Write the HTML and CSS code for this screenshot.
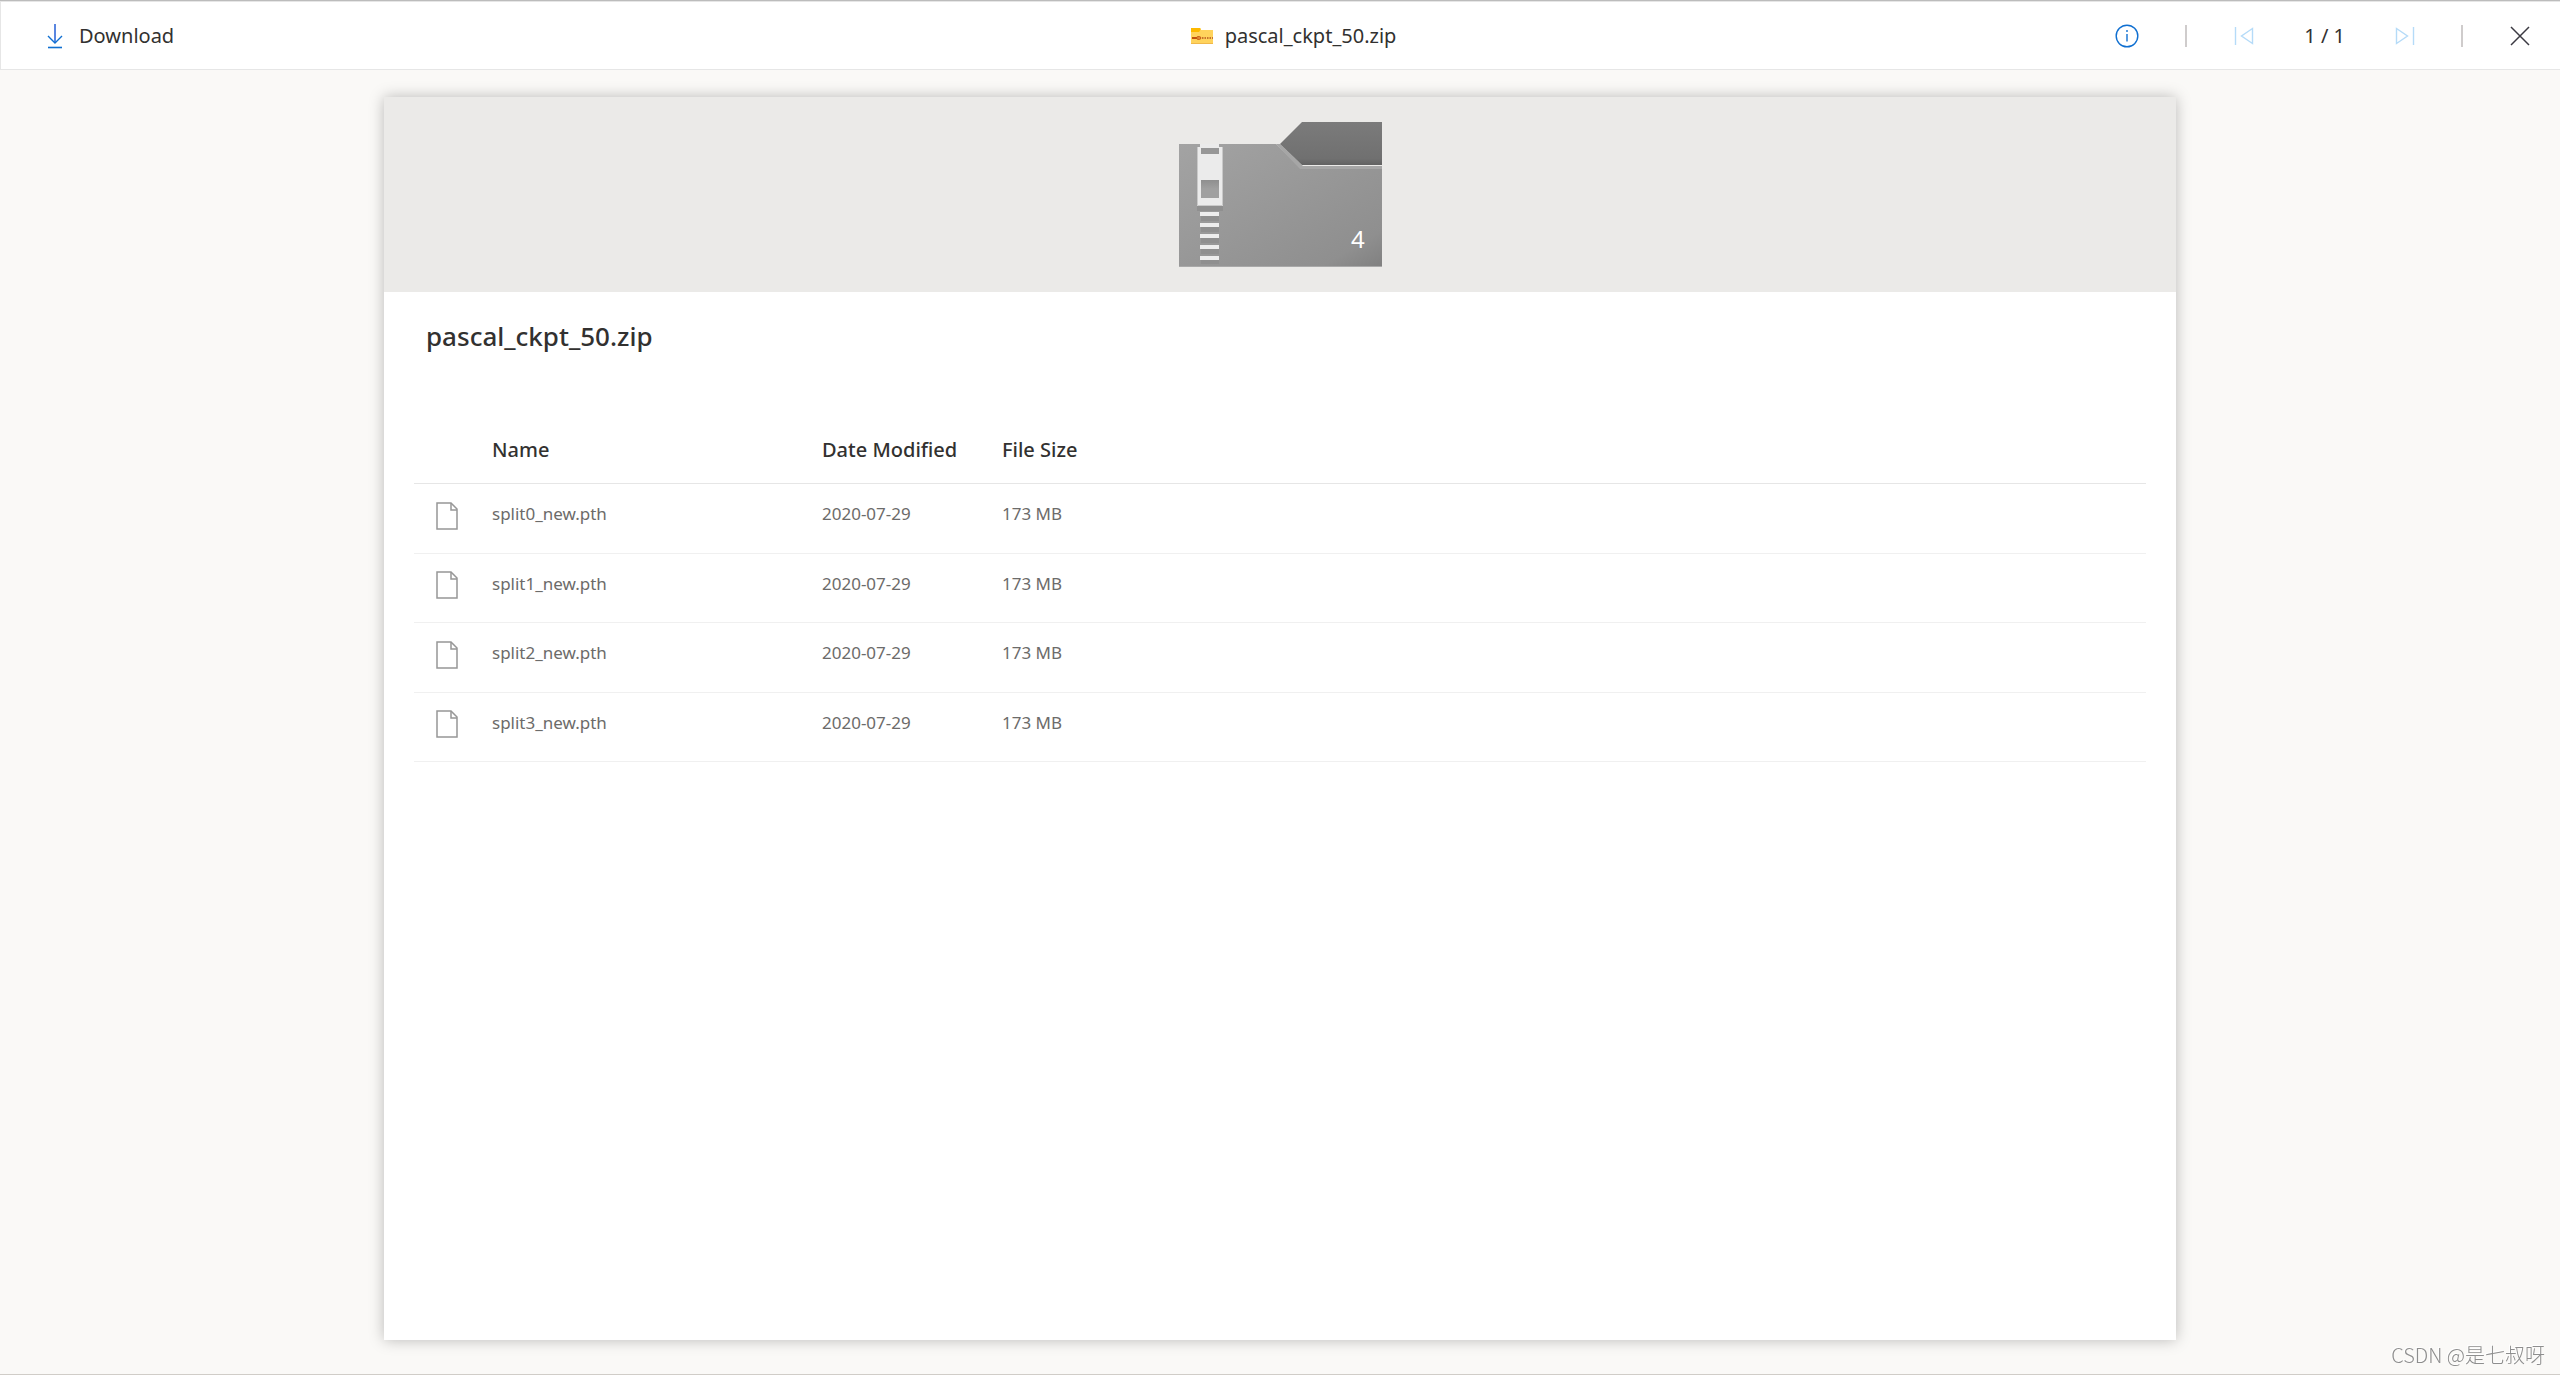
FILE: index.html
```html
<!DOCTYPE html>
<html lang="en">
<head>
<meta charset="utf-8">
<title>pascal_ckpt_50.zip</title>
<link rel="stylesheet" href="styles.css">
</head>
<body>
<header class="toolbar">
  <div class="toolbar-left">
    <button class="command" type="button">
      <svg class="icon-download" viewBox="0 0 16 26" width="16" height="26" fill="none" stroke="#0f6fd1"><path d="M8 1V20" stroke="#5a86e0" stroke-width="2"/><path d="M1 13L8 20L15 13" stroke-width="1.4"/><path d="M1 24.5H15" stroke-width="1.6"/></svg>
      <span>Download</span>
    </button>
  </div>
  <div class="toolbar-title">
    <svg viewBox="0 0 22 16" width="22" height="16"><path d="M0 1H9L10 2H22V16H0Z" fill="#ffd35c"/><path d="M0 0H9L10 1L8 4H0Z" fill="#fdb900"/><path d="M0 15H22V16H0Z" fill="#f0b84a"/><path d="M1 9H6V11H1Z" fill="#c2500e"/><rect x="5.700" y="8.700" width="4" height="2.600" rx="1" fill="#e8953a" stroke="#c2500e"/><path d="M11 10H22" stroke="#b5541c" stroke-width="1.500" stroke-dasharray="1.500 1"/></svg>
    <span>pascal_ckpt_50.zip</span>
  </div>
  <div class="toolbar-right">
    <button class="icon-button" type="button" aria-label="Details"><svg viewBox="0 0 24 24" width="24" height="24" fill="none" stroke="#0f6fd1" stroke-width="1.4"><circle cx="12" cy="12" r="10.800"/><path d="M12 10V17.500"/><path d="M12 6V8"/></svg></button>
    <span class="divider"></span>
    <button class="icon-button" type="button" aria-label="Previous file" disabled><svg viewBox="0 0 20 20" width="20" height="20" fill="none" stroke="#b5dbf8" stroke-width="1.4"><path d="M1.500 1V19"/><path d="M18.500 2.500V17.500L7.500 10Z"/></svg></button>
    <span class="pages">1 / 1</span>
    <button class="icon-button" type="button" aria-label="Next file" disabled><svg viewBox="0 0 20 20" width="20" height="20" fill="none" stroke="#b5dbf8" stroke-width="1.4"><path d="M18.500 1V19"/><path d="M1.500 2.500V17.500L12.500 10Z"/></svg></button>
    <span class="divider"></span>
    <button class="icon-button" type="button" aria-label="Close"><svg viewBox="0 0 20 20" width="20" height="20" fill="none" stroke="#3b3a42" stroke-width="1.5"><path d="M1 1L19 19M19 1L1 19"/></svg></button>
  </div>
</header>
<main class="viewer">
  <article class="card">
    <div class="hero">
      <svg viewBox="0 0 203 145" width="203" height="145">
        <defs>
          <linearGradient id="front" x1="0" y1="0" x2="1" y2="1"><stop offset="0" stop-color="#a3a3a3"/><stop offset=".85" stop-color="#8f8f8f"/><stop offset="1" stop-color="#808080"/></linearGradient>
          <linearGradient id="tab" x1="0" y1="0" x2="0" y2="1"><stop offset="0" stop-color="#7b7b7b"/><stop offset=".85" stop-color="#707070"/><stop offset="1" stop-color="#626262"/></linearGradient>
          <linearGradient id="shade" x1="0" y1="0" x2="0" y2="1"><stop offset="0" stop-color="#8f8f8f"/><stop offset=".5" stop-color="#a0a0a0"/></linearGradient>
        </defs>
        <path d="M0 22H97L122 46H203V145H0Z" fill="url(#front)"/>
        <path d="M97 22H101L124 44H203V47H121Z" fill="#a6a6a6"/>
        <path d="M101 22L123 0H203V43H123Z" fill="url(#tab)"/>
        <path d="M0 144.500H203" stroke="#a9a9a9"/>
        <path d="M18 84H44V89H18Z" fill="#8f8f8f"/>
        <path d="M21 22H40V25H44V84H18V25H21Z" fill="#ebebeb"/>
        <path d="M18.500 25V83.500H43.500V25" fill="none" stroke="#c9c9c9"/>
        <path d="M22 26H40V32H22Z" fill="#979797"/>
        <path d="M22 58H40V76H22Z" fill="url(#shade)"/>
        <g fill="#8f8f8f"><path d="M22 94H40V99H22ZM22 105H40V110H22ZM22 116H40V121H22ZM22 127H40V132H22ZM22 138H40V142H22Z"/></g>
        <g fill="#ededed"><path d="M21 90H40V94H21ZM21 101H40V105H21ZM21 112H40V116H21ZM21 123H40V127H21ZM21 134H40V138H21Z"/></g>
        <text class="hero-count" x="172" y="126">4</text>
      </svg>
    </div>
    <div class="content">
      <h1>pascal_ckpt_50.zip</h1>
      <table>
        <colgroup><col class="col-icon"><col class="col-name"><col class="col-date"><col></colgroup>
        <thead><tr><th></th><th scope="col">Name</th><th scope="col">Date Modified</th><th scope="col">File Size</th></tr></thead>
        <tbody>
          <tr><td><svg class="file" viewBox="0 0 22 28"><path d="M1 1H15L21 7V27H1Z"/><path d="M15 1V8H21"/></svg></td><td>split0_new.pth</td><td>2020-07-29</td><td>173 MB</td></tr>
          <tr><td><svg class="file" viewBox="0 0 22 28"><path d="M1 1H15L21 7V27H1Z"/><path d="M15 1V8H21"/></svg></td><td>split1_new.pth</td><td>2020-07-29</td><td>173 MB</td></tr>
          <tr><td><svg class="file" viewBox="0 0 22 28"><path d="M1 1H15L21 7V27H1Z"/><path d="M15 1V8H21"/></svg></td><td>split2_new.pth</td><td>2020-07-29</td><td>173 MB</td></tr>
          <tr><td><svg class="file" viewBox="0 0 22 28"><path d="M1 1H15L21 7V27H1Z"/><path d="M15 1V8H21"/></svg></td><td>split3_new.pth</td><td>2020-07-29</td><td>173 MB</td></tr>
        </tbody>
      </table>
    </div>
  </article>
</main>
<div class="watermark">CSDN @是七叔呀</div>
</body>
</html>
```
FILE: styles.css
```css
* { box-sizing: border-box; }

body {
  margin: 0;
  min-height: 100vh;
  display: flex;
  flex-direction: column;
  background: #faf9f7;
  border-top: 1px solid #bcbcbc;
  border-bottom: 1px solid #d0cdc8;
  color: #323130;
  font-family: "Noto Sans", "Open Sans", sans-serif;
  font-size: 20px;
}

svg { display: block; }

button {
  display: flex;
  align-items: center;
  padding: 0;
  border: 0;
  background: none;
  color: inherit;
  font: inherit;
}

.toolbar {
  display: grid;
  grid-template-columns: 1fr auto 1fr;
  align-items: center;
  height: 69px;
  padding: 0 30px 0 46px;
  background: #fff;
  border: 1px solid #e6e6e6;
  border-right: 0;
}

.command { gap: 16px; }

.toolbar-title {
  display: flex;
  align-items: center;
  gap: 12px;
  padding-left: 10px;
}

.toolbar-right {
  display: flex;
  align-items: center;
  justify-content: flex-end;
}

.icon-button { justify-content: center; }

.divider {
  width: 2px;
  height: 22px;
  margin: 0 47px 0 46px;
  background: #cfcccc;
}

.pages { margin: 0 50px; }

.viewer {
  flex: 1;
  display: flex;
  padding: 27px 15% 34px;
}

.card {
  flex: 1;
  background: #fff;
  box-shadow: 0 0 14px rgba(0, 0, 0, .26);
}

.hero {
  display: flex;
  justify-content: center;
  padding: 25px 0;
  background: #ebeae8;
}

.hero-count {
  fill: #fff;
  font-size: 24px;
}

.content { padding: 22px 30px; }

h1 {
  margin: 0 0 50px 12px;
  font-size: 26px;
  line-height: 44px;
  font-weight: 500;
}

table {
  width: 100%;
  table-layout: fixed;
  border-collapse: separate;
  border-spacing: 0;
}

.col-icon { width: 78px; }
.col-name { width: 330px; }
.col-date { width: 180px; }

th {
  height: 76px;
  padding: 8px 0 0;
  border-bottom: 1px solid #e6e6e6;
  text-align: left;
  font-weight: 500;
  font-size: 20px;
}

td {
  height: 70px;
  padding: 0 0 10px;
  border-bottom: 1px solid #f0f0f0;
  color: #6c6b6a;
  font-size: 17px;
}

tr:nth-child(even) td { height: 69px; }

td:first-child { padding: 0 0 6px 22px; }

.file {
  width: 22px;
  height: 28px;
  fill: none;
  stroke: #979797;
  stroke-width: 1.5;
}

.watermark {
  position: fixed;
  right: 15px;
  bottom: 5px;
  color: #8e8e8e;
  font: 300 20px/30px "Noto Sans CJK SC", sans-serif;
  text-shadow: -1px -1px 0 #fff;
}
```
